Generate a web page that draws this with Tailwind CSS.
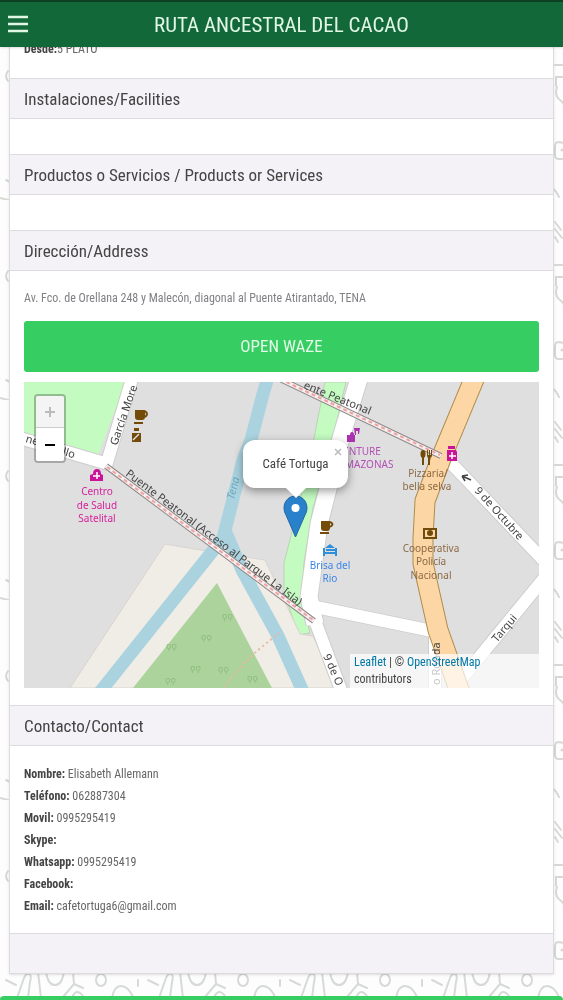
<!DOCTYPE html>
<html lang="es">
<head>
  <meta charset="UTF-8" />
  <meta name="viewport" content="width=device-width, initial-scale=1.0" />
  <title>Ruta Ancestral del Cacao</title>
  <script src="https://cdn.jsdelivr.net/npm/@tailwindcss/browser@4"></script>
</head>
<body class="min-h-screen bg-[#fdfdfd] font-['Roboto_Condensed','Roboto',sans-serif] text-[#444]">

  <!-- Background pattern -->
  <svg class="fixed inset-0 -z-10 h-full w-full" aria-hidden="true">
    <defs>
      <pattern id="doodles" width="142" height="200" patternUnits="userSpaceOnUse">
        <g fill="none" stroke="#d6dad7" stroke-width="2" stroke-linecap="round">
          <path d="M6 180l10 5M17 198l7-20q2-5 5-4q3 1 1 8l-2 16M38 172l3 26M46 172q2 13 9 13t9-13M73 172l1 12l-11 13M74 184l9 4M72 198q4-11 11-2M112 198q2-12 9-12t12 11" />
          <ellipse cx="101" cy="180" rx="5" ry="6" />
          <path d="M129 65h9M130 86v-9h8M131 87q-3 9 3 13t4 10M138 143l-6-1q-3 0-3 5v8q0 4 4 4h6M129 22l6 8M129 29l7 9M129 37l3 5M138 180v6" />
          <path d="M0 198l8 2M8 71q-4 5 0 10" />
        </g>
        <circle cx="136" cy="150" r="1.5" fill="#d6dad7" />
      </pattern>
    </defs>
    <rect width="100%" height="100%" fill="url(#doodles)" />
  </svg>

  <!-- Top bar -->
  <header class="sticky top-0 z-40 flex h-[47px] items-center border-t-2 border-[#0d3f22] bg-[#13683a] px-2 text-[#e0f7e4] shadow">
    <button class="w-5" aria-label="Menu">
      <svg class="h-5 w-5" viewBox="0 0 20 20" fill="none" stroke="currentColor" stroke-width="2.500"><path d="M0 2h20M0 9h20M0 16h20" /></svg>
    </button>
    <h1 class="flex-1 pr-5 text-center text-[21px] leading-[40px]">RUTA ANCESTRAL DEL CACAO</h1>
  </header>

  <main class="px-[9px] pb-[27px]">
    <div class="overflow-hidden border-x border-b border-[#dddbdf] bg-white shadow-sm">
      <p class="-mt-2 h-[39px] px-[14px] text-[12px] leading-[20px] text-[#666]"><b class="text-[#444]">Desde:</b>5 PLATO</p>

      <h2 class="h-[41px] border-y border-[#dddbdf] bg-[#f4f2f6] px-[14px] text-[17px] leading-[40px]">Instalaciones/Facilities</h2>
      <div class="h-[35px]"></div>

      <h2 class="h-[41px] border-y border-[#dddbdf] bg-[#f4f2f6] px-[14px] text-[17px] leading-[40px]">Productos o Servicios / Products or Services</h2>
      <div class="h-[35px]"></div>

      <h2 class="h-[41px] border-y border-[#dddbdf] bg-[#f4f2f6] px-[14px] text-[17px] leading-[40px]">Dirección/Address</h2>
      <section class="px-[14px] pt-[18px] pb-[17px]">
        <p class="text-[12px] leading-[18px] text-[#808085]">Av. Fco. de Orellana 248 y Malecón, diagonal al Puente Atirantado, TENA</p>
        <button class="mt-[14px] block h-[51px] w-full rounded-[3px] bg-[#36ce62] text-[17px] text-[#e4fbe9]">OPEN WAZE</button>

        <!-- Map -->
        <div class="relative mt-[10px] h-[306px] overflow-hidden bg-[#e0dfdf]">
          <svg class="h-full w-full font-['Noto_Sans',sans-serif]" viewBox="24 382 515 306" preserveAspectRatio="xMidYMid slice">
            <!-- areas -->
            <path d="M24 382h102l-28 73l-74-21z" fill="#c3fbc1" />
            <path d="M325 382h21l-13 56l-20 70l-9 55l-2 40l8 30l-12 2l-14-44v-28l16-63l14-62z" fill="#c3fbc1" stroke="#bcd3b5" />
            <path d="M165 544l35 6l65 10l35 74l13 2l24 52H70z" fill="#f0ede7" stroke="#d9d4cf" />
            <path d="M217 583l55 105H133z" fill="#abd39b" />
            <g fill="none" stroke="#aad3df">
              <path d="M269 374l-6 20l-12 46l-8 20l-20 78L100 692" stroke-width="13" />
              <path d="M224 528l18 42l36 66l27 60" stroke-width="13" />
            </g>
            <path d="M279 633q-10 8-22 18t-34 37" fill="none" stroke="#eab8a4" stroke-width="2" stroke-dasharray="2 3" />
            <g fill="#8ebd7f" font-size="9">
              <text x="166" y="649">ϙϙ</text><text x="190" y="671">ϙϙ</text><text x="165" y="683">ϙϙ</text>
              <text x="201" y="640">ϙϙ</text><text x="222" y="619">ϙϙ</text><text x="218" y="672">ϙϙ</text><text x="247" y="681">ϙϙ</text>
            </g>

            <!-- roads -->
            <g fill="none" stroke="#cfcccc" stroke-width="14">
              <path d="M16 437l92 27M106 466l28-94M316 607l116 24M314 618l30 80M450 462l96 101M546 576l-92 112M435 632v60" />
              <path d="M361 372l-20 66l-22 86l-10 73l6 27" stroke-width="19" />
            </g>
            <g fill="none" stroke="#fff" stroke-width="12">
              <path d="M16 437l92 27M106 466l28-94M316 607l116 24M314 618l30 80M450 462l96 101M546 576l-92 112M435 632v60" />
              <path d="M361 372l-20 66l-22 86l-10 73l6 27" stroke-width="17" />
            </g>
            <path d="M477 372l-35 84l-17 45l-2 37v25l15 67l24 68" fill="none" stroke="#b08c4c" stroke-width="21" />
            <path d="M477 372l-35 84l-17 45l-2 37v25l15 67l24 68" fill="none" stroke="#fcd6a4" stroke-width="19" />
            <g fill="none">
              <path d="M106 466l208 155M280 379l161 77" stroke="#8f8888" stroke-width="6" />
              <path d="M106 466l208 155M280 379l161 77" stroke="#f5f0f0" stroke-width="4" />
              <path d="M107 467l206 153M280 379l160 76" stroke="#f2a0a0" stroke-width="2" stroke-dasharray="4 3" />
            </g>

            <!-- street names -->
            <g fill="#444" font-size="11">
              <text transform="translate(117 446) rotate(-71)">García More</text>
              <text transform="translate(25 442) rotate(16)">ne</text>
              <text transform="translate(62 455) rotate(16)">llo</text>
              <text transform="translate(125 475) rotate(37)">Puente Peatonal (Acceso al Parque La Isla)</text>
              <text transform="translate(303 388) rotate(22)">ente Peatonal</text>
              <text transform="translate(474 491) rotate(48)">9 de Octubre</text>
              <text transform="translate(497 643) rotate(-50)">Tarqui</text>
              <text transform="translate(323 656) rotate(66)">9 de O</text>
              <text transform="translate(440 685) rotate(-90)">o Ronda</text>
            </g>
            <text transform="translate(234 500) rotate(-76)" font-size="11" font-style="italic" fill="#6fa8c0">Tena</text>
            <path d="M471 480l-9-4m0 0l3 5m-3-5l6-1" stroke="#444" stroke-width="1.5" fill="none" />

            <!-- places -->
            <g font-size="10" text-anchor="middle">
              <g fill="#d6219c">
                <text x="97" y="495">Centro</text><text x="97" y="509">de Salud</text><text x="97" y="522">Satelital</text>
              </g>
              <g fill="#b34fb8">
                <text x="362" y="455">ENTURE</text><text x="366" y="468">AMAZONAS</text>
              </g>
              <g fill="#8c6a45">
                <text x="428" y="477">Pizzaria/</text><text x="427" y="490">bella selva</text>
                <text x="431" y="552">Cooperativa</text><text x="431" y="565">Policía</text><text x="431" y="579">Nacional</text>
              </g>
              <g fill="#3c86e8">
                <text x="330" y="569">Brisa del</text><text x="330" y="582">Rio</text>
              </g>
            </g>
            <!-- health centre and pharmacy -->
            <path d="M90 481v-6l3-1q0-5 4-5t4 5l2 1v6z" fill="#c9149a" />
            <path d="M97 472v7M93 476h7" stroke="#fff" stroke-width="1.5" />
            <path d="M448 446h7v3h-7zM447 450h9l1 2v9h-10v-9z" fill="#c9149a" />
            <path d="M452 452v7M449 456h7" stroke="#fff" stroke-width="1.5" />
            <!-- cafes -->
            <g fill="#734a08">
              <path d="M135 410h10v7q0 3-3 3h-4q-3 0-3-3zM134 422h9v2h-9z" />
              <path d="M145 411q4 3 0 6" fill="none" stroke="#734a08" stroke-width="2" />
              <path d="M321 521h9v7q0 3-3 3h-3q-3 0-3-3zM320 532h9v2h-9z" />
              <path d="M330 522q5 2 0 5" fill="none" stroke="#734a08" stroke-width="2" />
              <path d="M134 428h5v3h-5zM132 433h9v9h-9z" />
              <path d="M133 440l6-6" stroke="#e0dfdf" stroke-width="1.5" />
              <ellipse cx="423" cy="454" rx="2.5" ry="4" /><path d="M422 456h2v9h-2zM427 450h1v5h1v-5h1v5h1v-5h1v6l-2 2v7h-2v-7l-1-2z" />
              <path d="M423 528h14v11h-14z" />
              <path d="M425 530h10v7h-10z" fill="#f7d9ad" /><circle cx="430" cy="533" r="3" />
            </g>
            <!-- shop and hotel -->
            <path d="M347 435h3q0-3 2-3t2 3h1v7h-8zM354 428h6l-1 6h-1v-3h-2v4h-1z" fill="#a932ae" />
            <path d="M324 548v8M336 548v8M324 553h12M326 550h9" stroke="#2f8fd8" stroke-width="2" /><path d="M325 548l5-4l5 4z" fill="#2f8fd8" />
          </svg>

          <!-- Marker -->
          <svg class="absolute top-[113px] left-[259px] h-[43px] w-[25px]" viewBox="0 0 25 43">
            <path d="M12.5 1C6 1 1 6 1 13q0 4 2 7l9.500 22L22 20q2-3 2-7C24 6 19 1 12.5 1z" fill="#2a81cb" stroke="#2368a5" />
            <circle cx="12.5" cy="13" r="4" fill="#fff" />
          </svg>

          <!-- Popup -->
          <div class="absolute top-[58px] left-[219px] h-[48px] w-[105px] rounded-xl bg-white text-center text-[13px] leading-[48px] text-[#444] shadow-[0_3px_10px_rgba(0,0,0,0.4)]">
            Café Tortuga
            <button class="absolute top-1 right-1 leading-none text-[#bbb]" aria-label="Close">
              <svg class="h-3 w-3" viewBox="0 0 12 12" fill="none" stroke="currentColor" stroke-width="1.5"><path d="M3 5l6 6M9 5l-6 6" /></svg>
            </button>
            <svg class="absolute top-full left-1/2 h-[10px] w-5 -translate-x-1/2" viewBox="0 0 20 10"><path d="M0 0h20l-10 10z" fill="#fff" /></svg>
          </div>

          <!-- Zoom control -->
          <div class="absolute top-3 left-[10px] w-[32px] overflow-hidden rounded border-2 border-black/25 text-center">
            <button class="grid h-[32px] w-full place-items-center border-b border-[#ccc] bg-[#f4f4f4] text-[#bbb]" aria-label="Zoom in">
              <svg class="h-3 w-3" viewBox="0 0 12 12" stroke="currentColor" stroke-width="2"><path d="M1 6h10M6 1v10" /></svg>
            </button>
            <button class="grid h-[33px] w-full place-items-center bg-white text-black" aria-label="Zoom out">
              <svg class="h-3 w-3" viewBox="0 0 12 12" stroke="currentColor" stroke-width="2"><path d="M1 6h10" /></svg>
            </button>
          </div>

          <div class="absolute right-0 bottom-0 w-[189px] bg-white/70 px-[4px] text-[12px] leading-[17px] text-[#444]">
            <a class="text-[#0078a8]" href="#">Leaflet</a> | © <a class="text-[#0078a8]" href="#">OpenStreetMap</a><br />contributors
          </div>
        </div>
      </section>

      <h2 class="h-[41px] border-y border-[#dddbdf] bg-[#f4f2f6] px-[14px] text-[17px] leading-[40px]">Contacto/Contact</h2>
      <section class="px-[14px] pt-[17px] pb-[16px] text-[12px] leading-[22px] text-[#666]">
        <p><b class="text-[#444]">Nombre:</b> Elisabeth Allemann</p>
        <p><b class="text-[#444]">Teléfono:</b> 062887304</p>
        <p><b class="text-[#444]">Movil:</b> 0995295419</p>
        <p><b class="text-[#444]">Skype:</b></p>
        <p><b class="text-[#444]">Whatsapp:</b> 0995295419</p>
        <p><b class="text-[#444]">Facebook:</b></p>
        <p><b class="text-[#444]">Email:</b> cafetortuga6@gmail.com</p>
      </section>
      <div class="h-[40px] border-t border-[#dddbdf] bg-[#f4f2f6]"></div>
    </div>
  </main>

  <div class="fixed inset-x-0 bottom-0 z-40 h-1 rounded-t bg-[#36ce62]"></div>
</body>
</html>
